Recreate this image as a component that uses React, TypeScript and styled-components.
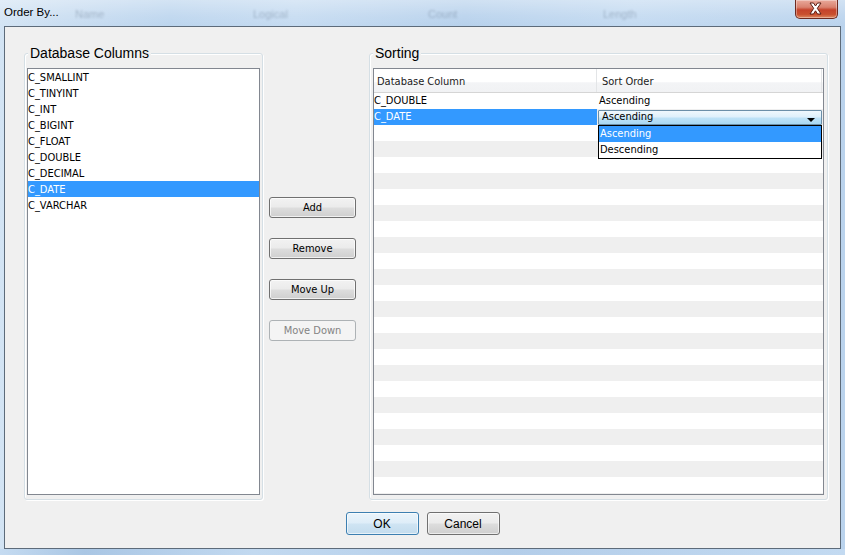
import React from 'react'
import styled, { createGlobalStyle } from 'styled-components'

const GlobalStyle = createGlobalStyle`
  html, body {
    margin: 0;
    padding: 0;
    width: 845px;
    height: 555px;
    overflow: hidden;
  }
  body {
    font-family: "Liberation Sans", Arial, sans-serif;
  }
`

const uiFont = `"DejaVu Sans Condensed", "Liberation Sans", Arial, sans-serif`

const columns = [
  'C_SMALLINT',
  'C_TINYINT',
  'C_INT',
  'C_BIGINT',
  'C_FLOAT',
  'C_DOUBLE',
  'C_DECIMAL',
  'C_DATE',
  'C_VARCHAR',
]

const sortRows = [
  { column: 'C_DOUBLE', order: 'Ascending' },
  { column: 'C_DATE', order: 'Ascending', editing: true },
]

const ghostLabels = [
  { text: 'Name', width: 178 },
  { text: 'Logical', width: 175 },
  { text: 'Count', width: 175 },
  { text: 'Length', width: 120 },
]

const App = () => {
  const fillerRows = Array.from({ length: 24 }, (_, i) => i + sortRows.length)

  return (
    <>
      <GlobalStyle />
      <Window>
        <TitleBar>
          <Title>Order By...</Title>
          {ghostLabels.map(g => (
            <Ghost key={g.text} width={g.width}>
              {g.text}
            </Ghost>
          ))}
          <CloseButton>
            <svg width="43" height="19" viewBox="0 0 43 19">
              <path
                d="M16 4 L19.5 4 L21.5 7 L23.5 4 L27 4 L23.3 9.3 L27 15 L23.5 15 L21.5 11.8 L19.5 15 L16 15 L19.7 9.3 Z"
                fill="#ffffff"
                stroke="#5a1e14"
                strokeWidth="1"
                strokeLinejoin="round"
              />
            </svg>
          </CloseButton>
        </TitleBar>

        <Client>
          <Main>
            <Group width={239} inset={2}>
              <Legend>Database Columns</Legend>
              <ListBox>
                {columns.map(c => (
                  <ListItem key={c} selected={c === 'C_DATE'}>
                    {c}
                  </ListItem>
                ))}
              </ListBox>
            </Group>

            <ButtonColumn>
              <PushButton>Add</PushButton>
              <PushButton>Remove</PushButton>
              <PushButton>Move Up</PushButton>
              <PushButton disabled>Move Down</PushButton>
            </ButtonColumn>

            <Group grow inset={3}>
              <Legend>Sorting</Legend>
              <Table>
                <HeaderRow>
                  <HeaderCell first>Database Column</HeaderCell>
                  <HeaderCell>Sort Order</HeaderCell>
                </HeaderRow>
                <Rows>
                  {sortRows.map((r, i) => (
                    <Row key={r.column} striped={i % 2 === 1}>
                      <Cell first selected={r.editing}>
                        {r.column}
                      </Cell>
                      <Cell>
                        {r.editing ? (
                          <ComboWrap>
                            <Combo>
                              <ComboText>{r.order}</ComboText>
                              <ComboArrow />
                            </Combo>
                            <Popup>
                              <PopupItem selected>Ascending</PopupItem>
                              <PopupItem>Descending</PopupItem>
                            </Popup>
                          </ComboWrap>
                        ) : (
                          r.order
                        )}
                      </Cell>
                    </Row>
                  ))}
                  {fillerRows.map(i => (
                    <Row key={i} striped={i % 2 === 1}>
                      <Cell first />
                      <Cell />
                    </Row>
                  ))}
                </Rows>
              </Table>
            </Group>
          </Main>

          <Footer>
            <DialogButton isDefault>OK</DialogButton>
            <DialogButton>Cancel</DialogButton>
          </Footer>
        </Client>
        <BottomFrame />
      </Window>
    </>
  )
}

const Window = styled.div`
  width: 845px;
  height: 555px;
  display: flex;
  flex-direction: column;
  background: linear-gradient(
    90deg,
    #d3e4f4 0%,
    #c9ddf1 8%,
    #bcd5ee 20%,
    #c5dbf1 35%,
    #b7d1ec 55%,
    #c3daf1 75%,
    #bad3ed 100%
  );
`

const TitleBar = styled.div`
  height: 26px;
  flex-shrink: 0;
  display: flex;
  align-items: flex-start;
  padding-left: 4px;
  box-sizing: border-box;
  background: linear-gradient(
    180deg,
    rgba(255, 255, 255, 0.35) 0%,
    rgba(255, 255, 255, 0.1) 60%,
    rgba(255, 255, 255, 0) 100%
  );
`

const Title = styled.div`
  width: 71px;
  flex-shrink: 0;
  padding-top: 5px;
  font-family: "Liberation Sans", Arial, sans-serif;
  font-size: 11.5px;
  line-height: 14px;
  color: #000;
  white-space: nowrap;
`

const Ghost = styled.div<{ width: number }>`
  width: ${p => p.width}px;
  flex-shrink: 0;
  padding-top: 8px;
  font-family: "Liberation Sans", Arial, sans-serif;
  font-size: 11px;
  color: #43546a;
  opacity: 0.3;
  filter: blur(1.2px);
`

const CloseButton = styled.div`
  margin-left: auto;
  margin-right: 7px;
  width: 43px;
  height: 19px;
  box-sizing: border-box;
  border: 1px solid #6e2a20;
  border-top: none;
  border-radius: 0 0 5px 5px;
  background: linear-gradient(
    180deg,
    #e9a99b 0%,
    #d9826f 40%,
    #c5432b 55%,
    #c9502f 80%,
    #de8a62 100%
  );
  box-shadow: inset 0 0 0 1px rgba(255, 255, 255, 0.35);
  display: flex;
  align-items: center;
  justify-content: center;
  svg {
    display: block;
    margin-left: -2px;
    margin-top: -1px;
  }
`

const Client = styled.div`
  margin: 0 4px;
  height: 523px;
  flex-shrink: 0;
  box-sizing: border-box;
  border: 1px solid #5d6b7a;
  background: #f0f0f0;
  display: flex;
  flex-direction: column;
`

const BottomFrame = styled.div`
  flex: 1;
  background: linear-gradient(
    90deg,
    #c5dbf1 0%,
    #a9c6e4 10%,
    #c2d9f0 30%,
    #b3cde9 60%,
    #c3daf1 100%
  );
`

const Main = styled.div`
  display: flex;
  padding: 26px 12px 0 19px;
`

const Group = styled.div<{ width?: number; grow?: boolean; inset: number }>`
  position: relative;
  box-sizing: border-box;
  height: 447px;
  ${p => (p.width ? `width: ${p.width}px; flex-shrink: 0;` : '')}
  ${p => (p.grow ? 'flex: 1; min-width: 0;' : '')}
  border: 1px solid #d5dfe5;
  border-radius: 3px;
  box-shadow: inset 1px 1px 0 #ffffff, 1px 1px 0 #ffffff;
  padding: 14px ${p => p.inset}px 4px ${p => p.inset}px;
  display: flex;
`

const Legend = styled.div`
  position: absolute;
  top: -9px;
  left: 3px;
  padding: 0 2px;
  background: #f0f0f0;
  font-family: "Liberation Sans", Arial, sans-serif;
  font-size: 14px;
  line-height: 16px;
  color: #000;
`

const ListBox = styled.div`
  flex: 1;
  box-sizing: border-box;
  border: 1px solid #828790;
  background: #fff;
  display: flex;
  flex-direction: column;
  overflow: hidden;
`

const ListItem = styled.div<{ selected?: boolean }>`
  height: 16px;
  flex-shrink: 0;
  box-sizing: border-box;
  padding-top: 1px;
  line-height: 15px;
  font-family: ${uiFont};
  font-size: 11px;
  color: ${p => (p.selected ? '#fff' : '#000')};
  background: ${p => (p.selected ? '#3399ff' : 'transparent')};
  white-space: nowrap;
`

const ButtonColumn = styled.div`
  width: 106px;
  flex-shrink: 0;
  box-sizing: border-box;
  padding: 144px 0 0 6px;
  display: flex;
  flex-direction: column;
  gap: 20px;
`

const PushButton = styled.div<{ disabled?: boolean }>`
  width: 87px;
  height: 21px;
  box-sizing: border-box;
  border: 1px solid ${p => (p.disabled ? '#adb2b5' : '#707070')};
  border-radius: 3px;
  background: ${p =>
    p.disabled
      ? '#f4f4f4'
      : 'linear-gradient(180deg, #f2f2f2 0%, #ebebeb 48%, #dddddd 52%, #cfcfcf 100%)'};
  box-shadow: ${p => (p.disabled ? 'none' : 'inset 0 0 0 1px rgba(255,255,255,0.7)')};
  display: flex;
  align-items: center;
  justify-content: center;
  font-family: ${uiFont};
  font-size: 11px;
  color: ${p => (p.disabled ? '#838383' : '#000')};
`

const Table = styled.div`
  flex: 1;
  box-sizing: border-box;
  border: 1px solid #828790;
  background: #fff;
  display: flex;
  flex-direction: column;
  overflow: hidden;
`

const HeaderRow = styled.div`
  display: flex;
  height: 24px;
  flex-shrink: 0;
  box-sizing: border-box;
  border-bottom: 1px solid #d5d5d5;
  background: linear-gradient(180deg, #ffffff 0%, #ffffff 55%, #f3f4f6 60%, #f1f2f4 100%);
`

const HeaderCell = styled.div<{ first?: boolean }>`
  box-sizing: border-box;
  ${p => (p.first ? 'width: 223px; flex-shrink: 0;' : 'flex: 1; margin-right: 1px;')}
  border-right: 1px solid #e3e5e7;
  padding: 6px 0 0 ${p => (p.first ? 3 : 5)}px;
  font-family: ${uiFont};
  font-size: 11px;
  line-height: 14px;
  color: #1b1b1b;
`

const Rows = styled.div`
  display: flex;
  flex-direction: column;
  flex-shrink: 0;
`

const Row = styled.div<{ striped?: boolean }>`
  display: flex;
  height: 16px;
  flex-shrink: 0;
  background: ${p => (p.striped ? '#efefef' : '#ffffff')};
`

const Cell = styled.div<{ first?: boolean; selected?: boolean }>`
  box-sizing: border-box;
  ${p => (p.first ? 'width: 223px; flex-shrink: 0;' : 'flex: 1;')}
  padding-left: ${p => (p.first ? 0 : 2)}px;
  font-family: ${uiFont};
  font-size: 11px;
  line-height: 16px;
  white-space: nowrap;
  color: ${p => (p.selected ? '#fff' : '#000')};
  background: ${p => (p.selected ? '#3399ff' : 'transparent')};
`

const ComboWrap = styled.div`
  position: relative;
  margin-left: -1px;
  margin-right: 1px;
  padding-top: 1px;
`

const Combo = styled.div`
  height: 15px;
  box-sizing: border-box;
  border: 1px solid #6c8fa8;
  border-radius: 1px;
  background: linear-gradient(180deg, #f0f8fd 0%, #dff0fb 45%, #bfe2f7 55%, #a9d8f3 100%);
  display: flex;
  align-items: flex-start;
  overflow: hidden;
`

const ComboText = styled.div`
  flex: 1;
  padding-left: 3px;
  margin-top: -2px;
  font-family: ${uiFont};
  font-size: 11px;
  line-height: 16px;
  color: #000;
`

const ComboArrow = styled.div`
  align-self: flex-end;
  margin: 0 6px 2px 0;
  width: 0;
  height: 0;
  border-left: 4px solid transparent;
  border-right: 4px solid transparent;
  border-top: 4px solid #000;
`

const Popup = styled.div`
  position: absolute;
  top: 16px;
  left: 0;
  right: 0;
  z-index: 2;
  box-sizing: border-box;
  border: 1px solid #000;
  background: #fff;
  display: flex;
  flex-direction: column;
`

const PopupItem = styled.div<{ selected?: boolean }>`
  height: 16px;
  line-height: 16px;
  padding-left: 1px;
  font-family: ${uiFont};
  font-size: 11px;
  color: ${p => (p.selected ? '#fff' : '#000')};
  background: ${p => (p.selected ? '#3399ff' : '#fff')};
`

const Footer = styled.div`
  display: flex;
  justify-content: center;
  gap: 8px;
  margin-top: 12px;
`

const DialogButton = styled.div<{ isDefault?: boolean }>`
  width: 73px;
  height: 23px;
  box-sizing: border-box;
  border: 1px solid ${p => (p.isDefault ? '#3c7fb1' : '#707070')};
  border-radius: 3px;
  background: ${p =>
    p.isDefault
      ? 'linear-gradient(180deg, #eaf4fb 0%, #deedf8 48%, #cfe4f3 52%, #c3dcee 100%)'
      : 'linear-gradient(180deg, #f2f2f2 0%, #ebebeb 48%, #dddddd 52%, #cfcfcf 100%)'};
  box-shadow: inset 0 0 0 1px rgba(255, 255, 255, 0.6);
  display: flex;
  align-items: center;
  justify-content: center;
  font-family: "Liberation Sans", Arial, sans-serif;
  font-size: 12px;
  color: #000;
`

export default App
